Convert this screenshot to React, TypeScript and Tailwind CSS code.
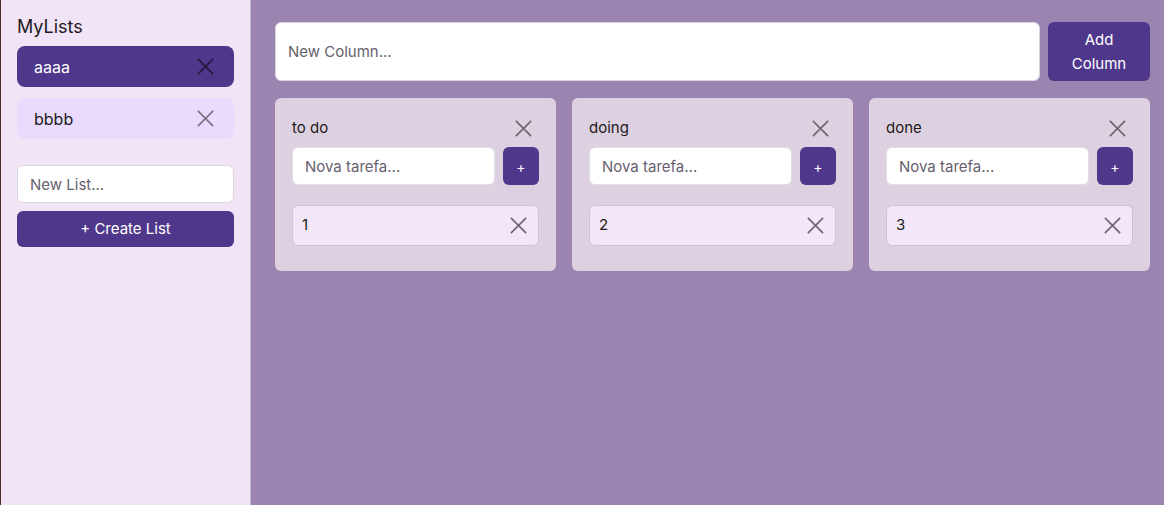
import React from "react";

function XIcon({ className }: { className?: string }) {
  return (
    <svg viewBox="0 0 20 20" className={className} fill="none" stroke="currentColor" strokeWidth={1.7} strokeLinecap="butt">
      <line x1="2" y1="2" x2="18" y2="18" />
      <line x1="18" y1="2" x2="2" y2="18" />
    </svg>
  );
}

const columns = [
  { title: "to do", tasks: ["1"] },
  { title: "doing", tasks: ["2"] },
  { title: "done", tasks: ["3"] },
];

export default function App() {
  return (
    <div className="flex h-[505px] w-[1164px] font-['Inter',sans-serif] text-[#1d1b20]">
      <aside className="flex w-[251px] shrink-0 flex-col border-l border-l-[#4a3026] border-r border-r-[#c9bccf] bg-[#f1e4f6] pl-4 pr-4 pt-[14px]">
        <h1 className="text-[18px] leading-[26px]">MyLists</h1>
        <div className="mt-[6px] flex flex-col gap-[11px]">
          <div className="flex h-[41px] items-center justify-between rounded-lg bg-[#4f378b] pl-[17px] pr-[19px] text-white">
            <span className="text-[16px]">aaaa</span>
            <XIcon className="h-[19px] w-[19px] text-[#21163d]" />
          </div>
          <div className="flex h-[41px] items-center justify-between rounded-lg bg-[#eadbfe] pl-[17px] pr-[19px]">
            <span className="text-[16px]">bbbb</span>
            <XIcon className="h-[19px] w-[19px] text-[#77717f]" />
          </div>
        </div>
        <input
          placeholder="New List..."
          className="mt-[26px] h-[38px] w-full rounded-md border border-[#dcd6e0] bg-white px-3 text-[15px] placeholder:text-[#67616d] outline-none"
        />
        <button className="mt-2 h-[36px] w-full rounded-md bg-[#4f378b] text-[15px] text-white">+ Create List</button>
      </aside>
      <main className="flex-1 bg-[#9b84af] pl-6 pr-[14px] pt-[22px]">
        <div className="flex gap-2">
          <input
            placeholder="New Column..."
            className="h-[59px] flex-1 rounded-md border border-[#d9d2de] bg-white px-3 text-[15px] placeholder:text-[#67616d] outline-none"
          />
          <button className="h-[59px] w-[102px] rounded-md bg-[#4f378b] pt-[1px] text-[15px] leading-[24px] text-white">
            Add
            <br />
            Column
          </button>
        </div>
        <div className="mt-[17px] grid grid-cols-3 gap-4">
          {columns.map((c) => (
            <div key={c.title} className="h-[173px] rounded-md bg-[#ddd0e1] px-[17px] pt-[19px]">
              <div className="flex h-[22px] items-center justify-between pr-[6px]">
                <span className="text-[15px]">{c.title}</span>
                <XIcon className="h-[19px] w-[19px] text-[#6b6570]" />
              </div>
              <div className="mt-[8px] flex gap-2">
                <input
                  placeholder="Nova tarefa..."
                  className="h-[38px] min-w-0 flex-1 rounded-md border border-[#e3dde6] bg-white px-3 text-[15px] placeholder:text-[#67616d] outline-none"
                />
                <button className="h-[38px] w-[36px] rounded-md bg-[#4f378b] text-[14px] text-white">+</button>
              </div>
              <div className="mt-[20px] flex h-[41px] items-center justify-between rounded-md border border-[#cdc3d1] bg-[#f2e6f8] pl-[9px] pr-[10px]">
                <span className="text-[15px]">{c.tasks[0]}</span>
                <XIcon className="h-[19px] w-[19px] text-[#6b6570]" />
              </div>
            </div>
          ))}
        </div>
      </main>
    </div>
  );
}
